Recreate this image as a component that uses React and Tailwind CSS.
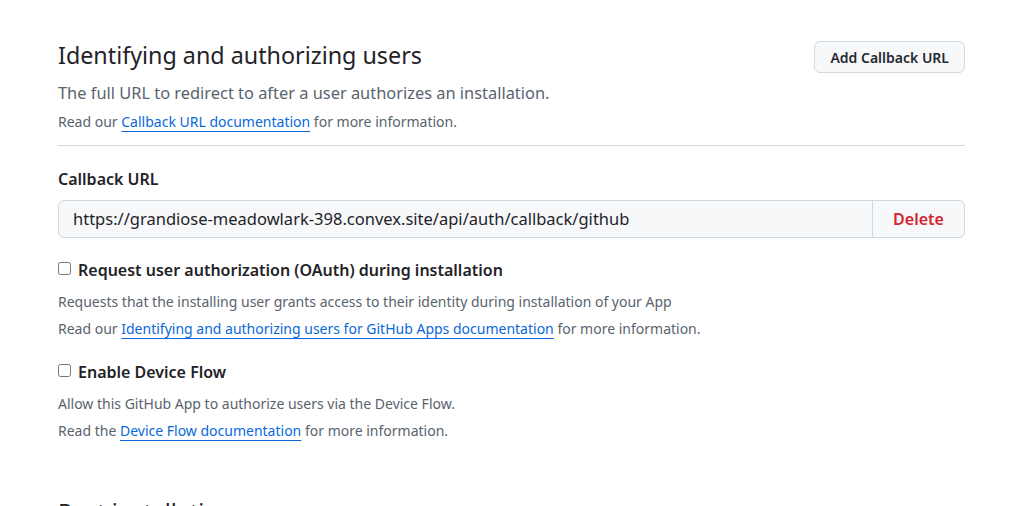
export default function App() {
  return (
    <div className="min-h-screen bg-white font-['Noto_Sans',sans-serif] text-[#1f2328] overflow-hidden h-[506px]">
      <div className="ml-[58px] w-[907px] pt-[37px]">
        <div className="flex items-start justify-between">
          <div>
            <h2 className="text-[23.3px] leading-[36px] font-normal">Identifying and authorizing users</h2>
            <p className="mt-[8px] text-[16.4px] leading-[24px] text-[#59636e]">
              The full URL to redirect to after a user authorizes an installation.
            </p>
            <p className="mt-[6px] text-[14px] leading-[21px] text-[#59636e]">
              Read our{" "}
              <a href="#" className="text-[#0969da] underline underline-offset-[4px]">
                Callback URL documentation
              </a>{" "}
              for more information.
            </p>
          </div>
          <button
            type="button"
            className="mt-[4px] h-[32px] rounded-md border border-[#d1d9e0] bg-[#f6f8fa] px-[15px] text-[14px] font-semibold text-[#25292e]"
          >
            Add Callback URL
          </button>
        </div>

        <hr className="mt-[13px] border-t border-[#d1d9e0]" />

        <label className="mt-[21px] block text-[16px] leading-[24px] font-semibold">Callback URL</label>
        <div className="mt-[9px] flex h-[38px] rounded-md border border-[#d1d9e0] bg-[#f6f8fa]">
          <input
            type="text"
            readOnly
            value="https://grandiose-meadowlark-398.convex.site/api/auth/callback/github"
            className="flex-1 bg-transparent pl-[14px] text-[16.5px] text-[#1f2328] outline-none"
          />
          <button type="button" className="w-[92px] border-l border-[#d1d9e0] text-[16px] font-semibold text-[#d1242f]">
            Delete
          </button>
        </div>

        <div className="mt-[20px]">
          <label className="flex items-start gap-[7px] text-[16px] leading-[24px] font-semibold">
            <input type="checkbox" className="m-0 mt-[4px] h-[13px] w-[13px]" />
            Request user authorization (OAuth) during installation
          </label>
          <p className="mt-[6px] text-[14px] leading-[27px] text-[#59636e]">
            Requests that the installing user grants access to their identity during installation of your App
          </p>
          <p className="text-[14px] leading-[27px] text-[#59636e]">
            Read our{" "}
            <a href="#" className="text-[#0969da] underline underline-offset-[4px]">
              Identifying and authorizing users for GitHub Apps documentation
            </a>{" "}
            for more information.
          </p>
        </div>

        <div className="mt-[18px]">
          <label className="flex items-start gap-[7px] text-[16px] leading-[24px] font-semibold">
            <input type="checkbox" className="m-0 mt-[4px] h-[13px] w-[13px]" />
            Enable Device Flow
          </label>
          <p className="mt-[6px] text-[14px] leading-[27px] text-[#59636e]">
            Allow this GitHub App to authorize users via the Device Flow.
          </p>
          <p className="text-[14px] leading-[27px] text-[#59636e]">
            Read the{" "}
            <a href="#" className="text-[#0969da] underline underline-offset-[4px]">
              Device Flow documentation
            </a>{" "}
            for more information.
          </p>
        </div>

        <h2 className="mt-[50px] text-[23.3px] leading-[36px] font-normal">Post installation</h2>
      </div>
    </div>
  );
}
